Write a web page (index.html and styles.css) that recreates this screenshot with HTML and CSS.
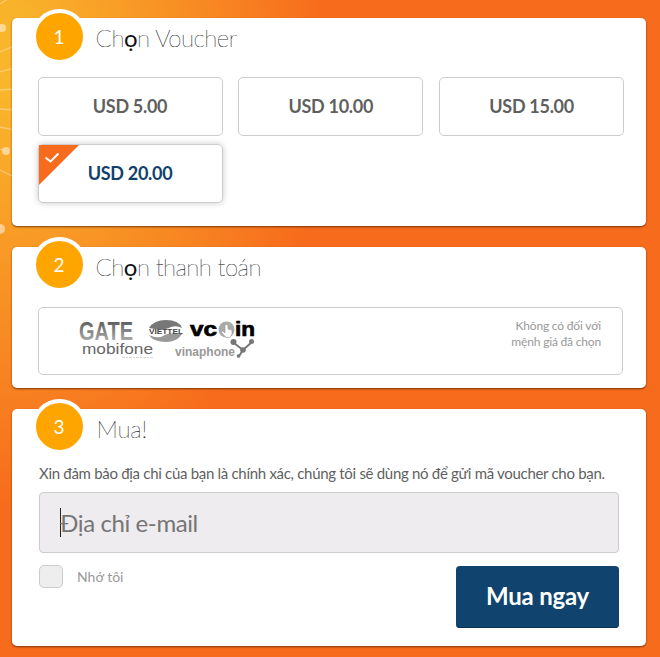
FILE: index.html
```html
<!DOCTYPE html>
<html lang="vi">
<head>
<meta charset="utf-8">
<title>Voucher</title>
<link rel="stylesheet" href="styles.css">
</head>
<body>
<svg class="backdrop" width="14" height="240" viewBox="0 0 14 240" aria-hidden="true">
  <g fill="none" stroke="#fff" stroke-opacity=".32" stroke-width="1.3">
    <path d="M0 4L8 -1M0 52L14 46M0 72L14 68M0 90L14 89M0 109L14 110M0 127L14 130M0 149L6 151M0 170L14 177"/>
  </g>
  <g fill="#fff" fill-opacity=".5"><circle cx="2" cy="28" r="4"/><circle cx="6" cy="151" r="4"/><circle cx="0" cy="229" r="5"/></g>
</svg>
<main class="steps">
  <section class="card card-voucher">
    <header class="head"><span class="num">1</span><h2>Ch<b>ọ</b>n Voucher</h2></header>
    <div class="options">
      <div class="option">USD 5.00</div>
      <div class="option">USD 10.00</div>
      <div class="option">USD 15.00</div>
      <div class="option selected">
        <svg class="corner" width="40" height="40" viewBox="0 0 40 40"><path d="M0 0H40L0 40Z" fill="#f76b1c"/><path d="M6.500 12.500L11.500 16.500L19.500 8.500" fill="none" stroke="#fff" stroke-width="2"/></svg>
        USD 20.00
      </div>
    </div>
  </section>
  <section class="card card-payment">
    <header class="head"><span class="num">2</span><h2>Ch<b>ọ</b>n thanh toán</h2></header>
    <div class="payment">
      <svg class="logos" width="180" height="50" viewBox="0 -6 180 50">
        <defs>
          <linearGradient id="steel" gradientUnits="userSpaceOnUse" x1="0" y1="2" x2="0" y2="22"><stop offset="0" stop-color="#5c5c5c"/><stop offset="1" stop-color="#acacac"/></linearGradient>
        </defs>
        <text class="gate" x="-1" y="21" textLength="54" lengthAdjust="spacingAndGlyphs">GATE</text>
        <path d="M69 9Q74 1 86 1Q99 1 102 9Q97 6 91 8Q84 12 69 9Z" fill="#777"/>
        <path d="M69 16Q78 20 83 17Q89 13 102 15Q97 23 86 23Q73 23 69 16Z" fill="#999"/>
        <text class="viettel" x="69" y="14.500" textLength="34" lengthAdjust="spacingAndGlyphs">VIETTEL</text>
        <text class="vcoin" x="110" y="17" textLength="27" lengthAdjust="spacingAndGlyphs">vc</text>
        <text class="vcoin" x="155" y="17" textLength="20" lengthAdjust="spacingAndGlyphs">in</text>
        <circle cx="146.500" cy="10.500" r="8" fill="#aaa"/>
        <path d="M145 14V6.500Q146.500 4.500 148 6.500V10L152 11V15L150 18.500H146L141 13L142.500 12Z" fill="#fff" stroke="#999" stroke-width=".6"/>
        <text class="mobifone" x="2" y="35" textLength="71" lengthAdjust="spacingAndGlyphs">mobifone</text>
        <path d="M42 38.500H73" stroke="#aaa" stroke-width="1" stroke-dasharray="3 1 2 1" opacity=".5"/>
        <text class="vinaphone" x="95" y="37" textLength="60" lengthAdjust="spacingAndGlyphs">vinaphone</text>
        <path d="M154 24L163 31L172 23M163 31L158.500 38" fill="none" stroke="#777" stroke-width="2"/>
        <g fill="#777"><circle cx="153.500" cy="23" r="3"/><circle cx="171.500" cy="22.500" r="2.500"/><circle cx="163" cy="31" r="2.800"/><circle cx="158.500" cy="37" r="1.800"/></g>
      </svg>
      <p class="unavailable">Không có đối với<br>mệnh giá đã chọn</p>
    </div>
  </section>
  <section class="card card-buy">
    <header class="head"><span class="num">3</span><h2>Mua!</h2></header>
    <p class="notice">Xin đảm bảo địa chỉ của bạn là chính xác, chúng tôi sẽ dùng nó để gửi mã voucher cho bạn.</p>
    <div class="email"><i class="caret"></i><span>Địa chỉ e-mail</span></div>
    <div class="actions">
      <div class="remember"><i class="box"></i><span>Nhớ tôi</span></div>
      <div class="buy">Mua ngay</div>
    </div>
  </section>
</main>
</body>
</html>
```
FILE: styles.css
```css
* { box-sizing: border-box; }
body {
  margin: 0;
  height: 657px;
  overflow: hidden;
  font-family: Lato, "Liberation Sans", sans-serif;
  color: #5f5f5f;
  background: radial-gradient(ellipse 330px 450px at 0 60px, #f9b52b 0, #f9b52b 8%, #f76b1c 100%);
}
.backdrop { position: absolute; left: 0; top: 0; }
.steps { position: relative; display: flex; flex-direction: column; gap: 21px; padding: 18px 14px 0 12px; }
.card { background: #fff; border-radius: 5px; box-shadow: 0 1px 2px rgba(70, 25, 0, .7); }
.card-voucher { height: 207.5px; padding: 0 20px 0 25.5px; }
.card-payment { height: 141px; padding: 0 23px 0 25.5px; }
.card-buy { height: 237px; padding: 0 27px; }
.head { display: flex; height: 59px; }
.num {
  flex: none;
  width: 55px;
  height: 55px;
  margin: -9px 0 0 -6px;
  border: 4px solid #fff;
  border-radius: 50%;
  background: #ffa500;
  color: #fff;
  font-size: 19px;
  line-height: 47px;
  text-align: center;
}
.card-payment .num, .card-buy .num { margin-top: -9.5px; }
.card-buy .num { margin-left: -7.5px; }
h2 { margin: 5px 0 0 9px; font-size: 24px; line-height: 30px; font-weight: 100; letter-spacing: -.5px; color: #111; -webkit-text-stroke: .2px #333; }
.card-payment h2 { letter-spacing: -.55px; }
.card-buy h2 { letter-spacing: -.2px; margin-left: 10px; }
h2 b { font-weight: 400; -webkit-text-stroke: 0; }
.options { display: grid; grid-template-columns: repeat(3, 185px); grid-auto-rows: 59px; gap: 8px 15.8px; }
.option {
  position: relative;
  border: 1px solid #ccc;
  border-radius: 5px;
  font-size: 18px;
  font-weight: 700;
  line-height: 57px;
  letter-spacing: -.3px;
  text-align: center;
}
.selected { color: #11416b; box-shadow: 0 0 6px rgba(0, 0, 0, .22); }
.corner { position: absolute; left: 0; top: 0; }
.payment {
  display: flex;
  justify-content: space-between;
  height: 68px;
  margin-top: 1px;
  padding: 10px 21px 0 41px;
  border: 1px solid #ccc;
  border-radius: 5px;
}
.logos { margin-top: -5px; overflow: visible; }
.gate { font: 700 25px "Liberation Sans", sans-serif; fill: url(#steel); }
.viettel { font: 700 6.5px "Liberation Sans", sans-serif; fill: #444; }
.vcoin { font: 700 20px "Liberation Sans", sans-serif; fill: #000; stroke: #000; stroke-width: .7; }
.mobifone { font: 400 15px "Liberation Sans", sans-serif; fill: #666; }
.vinaphone { font: 700 13px "Liberation Sans", sans-serif; fill: #999; }
.unavailable { margin: 0; font-size: 12px; line-height: 16px; letter-spacing: -.18px; text-align: right; color: #999; }
.notice { margin: -5px 0 0; font-size: 15px; line-height: 20px; letter-spacing: -.3px; white-space: nowrap; }
.email {
  display: flex;
  align-items: center;
  width: 580px;
  height: 61px;
  margin-top: 9px;
  padding-left: 20px;
  border: 1px solid #ccc;
  border-radius: 4px;
  background: #eeecef;
  color: #757575;
  font-size: 24px;
  letter-spacing: -.4px;
}
.caret { width: 1px; height: 29px; margin-right: -1px; background: #222; }
.actions { display: flex; justify-content: space-between; width: 580px; margin-top: 12px; }
.remember { display: flex; height: 23px; gap: 14px; align-items: center; font-size: 14px; color: #999; }
.box { width: 24px; height: 23px; border: 1px solid #ccc; border-radius: 5px; background: #eee; }
.buy {
  width: 163px;
  height: 62px;
  margin-top: 1px;
  border-radius: 4px;
  background: #10446e;
  box-shadow: inset 0 -1px #0a3055;
  color: #fff;
  font-size: 24px;
  font-weight: 700;
  line-height: 60px;
  letter-spacing: -.2px;
  text-align: center;
}
```
